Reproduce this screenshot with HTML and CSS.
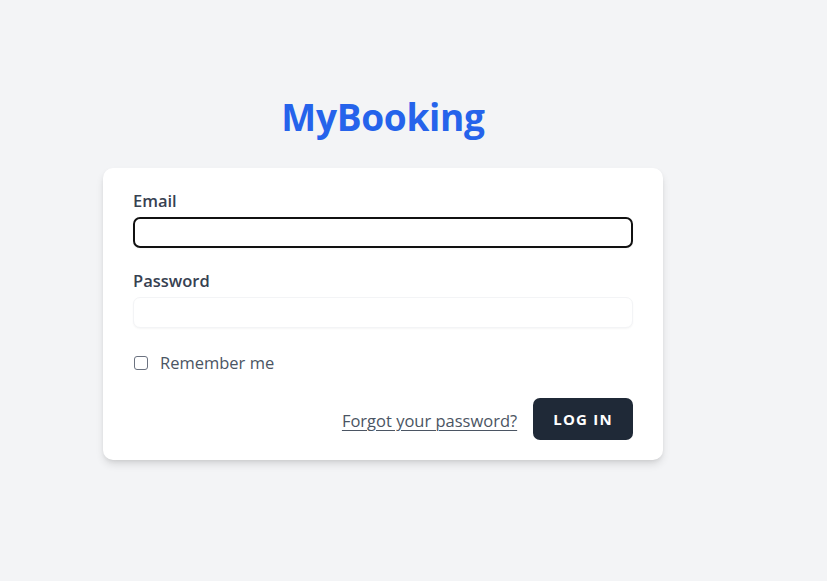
FILE: index.html
```html
<!DOCTYPE html>
<html lang="en">
<head>
<meta charset="utf-8">
<title>MyBooking - Log in</title>
<link rel="stylesheet" href="styles.css">
</head>
<body>
<div class="page">
  <h1 class="brand">MyBooking</h1>
  <form class="card">
    <label class="label" for="email">Email</label>
    <div class="input focused" id="email"></div>
    <label class="label gap" for="password">Password</label>
    <div class="input" id="password"></div>
    <label class="remember">
      <span class="checkbox"></span>
      <span class="remember-text">Remember me</span>
    </label>
    <div class="actions">
      <a class="forgot" href="#">Forgot your password?</a>
      <button type="button" class="btn">LOG IN</button>
    </div>
  </form>
</div>
</body>
</html>
```
FILE: styles.css
```css
html, body {
  margin: 0;
  padding: 0;
  background: #f3f4f6;
}
body {
  font-family: "Open Sans", "Noto Sans", sans-serif;
  width: 827px;
  height: 581px;
  overflow: hidden;
}
.page {
  width: 766px;
  display: flex;
  flex-direction: column;
  align-items: center;
  padding-top: 91px;
}
.brand {
  margin: 0;
  font-size: 37px;
  line-height: 52px;
  font-weight: 700;
  color: #2563eb;
  letter-spacing: -0.3px;
}
.card {
  margin-top: 25px;
  width: 560px;
  box-sizing: border-box;
  background: #fff;
  border-radius: 10px;
  padding: 20px 30px;
  box-shadow: 0 5px 8px -1px rgba(0,0,0,0.12), 0 2px 5px -2px rgba(0,0,0,0.1);
  display: flex;
  flex-direction: column;
}
.label {
  display: block;
  font-size: 16.5px;
  line-height: 25px;
  font-weight: 600;
  color: #374151;
}
.label.gap {
  margin-top: 20px;
}
.input {
  margin-top: 4px;
  height: 31px;
  box-sizing: border-box;
  border: 1px solid #f3f4f6;
  border-radius: 7px;
  box-shadow: 0 1px 2px rgba(0,0,0,0.04);
  background: #fff;
}
.input.focused {
  border: 2px solid #111;
}
.remember {
  margin-top: 22px;
  display: flex;
  align-items: center;
  height: 25px;
}
.checkbox {
  width: 14px;
  height: 14px;
  box-sizing: border-box;
  border: 1.5px solid #6b7280;
  border-radius: 3px;
  margin-left: 1px;
}
.remember-text {
  margin-left: 12px;
  font-size: 16.5px;
  color: #4b5563;
}
.actions {
  margin-top: 23px;
  display: flex;
  justify-content: flex-end;
  align-items: center;
}
.forgot {
  padding-top: 2px;
  font-size: 16.5px;
  color: #4b5563;
  text-decoration: underline;
  text-underline-offset: 3px;
  text-decoration-thickness: 1px;
}
.btn {
  margin-left: 16px;
  height: 42px;
  padding: 0 20px;
  background: #1f2937;
  color: #fff;
  border: none;
  border-radius: 7px;
  font-family: "Open Sans", "Noto Sans", sans-serif;
  font-weight: 700;
  font-size: 15px;
  letter-spacing: 1.25px;
}
```
